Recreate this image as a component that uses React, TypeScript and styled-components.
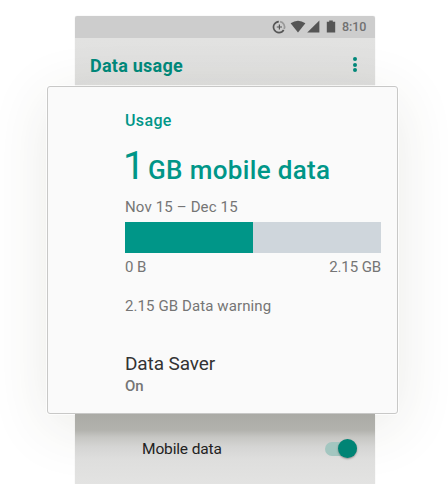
import React from 'react';
import styled, { createGlobalStyle } from 'styled-components';

const USED_GB = 1.075;
const LIMIT_GB = 2.15;

const GlobalStyle = createGlobalStyle`
  * {
    box-sizing: border-box;
  }

  body {
    margin: 0;
    background: #fff;
    font-family: Roboto, 'Liberation Sans', sans-serif;
  }
`;

const App: React.FC = () => (
  <>
    <GlobalStyle />
    <Stage>
      <Phone>
        <StatusBar>
          <StatusIcons />
          <Clock>8:10</Clock>
        </StatusBar>
        <Toolbar>
          <Title>Data usage</Title>
          <Menu aria-label="More options">
            <Dot />
            <Dot />
            <Dot />
          </Menu>
        </Toolbar>
        <Card>
          <SectionLabel>Usage</SectionLabel>
          <Total>
            <Amount>1</Amount>
            <Unit>GB mobile data</Unit>
          </Total>
          <Period>Nov 15 – Dec 15</Period>
          <Meter>
            <MeterFill style={{ width: `${(USED_GB / LIMIT_GB) * 100}%` }} />
          </Meter>
          <Scale>
            <span>0 B</span>
            <span>{LIMIT_GB} GB</span>
          </Scale>
          <Warning>{LIMIT_GB} GB Data warning</Warning>
          <SaverTitle>Data Saver</SaverTitle>
          <SaverState>On</SaverState>
        </Card>
        <SettingRow>
          <SettingName>Mobile data</SettingName>
          <Track role="switch" aria-checked>
            <Thumb />
          </Track>
        </SettingRow>
      </Phone>
    </Stage>
  </>
);

const StatusIcons: React.FC = () => (
  <Icons viewBox="0 0 66 16">
    {/* data saver ring */}
    <g fill="none" strokeWidth="1.7">
      <path d="M6.8 2.6A5.5 5.5 0 1 0 11.7 11" stroke="#555" />
      <path d="M8.1 2.6A5.5 5.5 0 0 1 12.2 10" stroke="#999" />
      <path d="M7.4 5.4V10.6M4.8 8H10" stroke="#555" strokeWidth="1.2" />
    </g>
    <g fill="#555">
      <path d="M18.6 4.2Q26 -0.8 33.4 4.2L26 13.4Z" />
      <path d="M35.2 13.6L47.4 1.4V13.6Z" />
      <path d="M57.2 1.4H60.8V2.8H63.2V13.6H54.8V2.8H57.2Z" />
    </g>
  </Icons>
);

const Stage = styled.main`
  width: 448px;
  height: 484px;
  padding: 16px 73px 0 75px;
  overflow: hidden;
`;

const Phone = styled.div`
  display: flex;
  flex-direction: column;
  width: 300px;
  height: 468px;
  box-shadow: 0 0 1px rgba(0, 0, 0, 0.2);
  border-radius: 2px 2px 0 0;
`;

const StatusBar = styled.header`
  display: flex;
  align-items: center;
  justify-content: flex-end;
  height: 22px;
  padding-right: 8px;
  background: #cdcdcd;
  border-radius: 2px 2px 0 0;
`;

const Icons = styled.svg`
  width: 66px;
  height: 16px;
  margin-right: 4px;
`;

const Clock = styled.span`
  width: 25px;
  color: #717171;
  font-size: 12.5px;
  font-weight: 500;
  line-height: 24px;
  letter-spacing: -0.1px;
`;

const Toolbar = styled.div`
  display: flex;
  align-items: center;
  justify-content: space-between;
  height: 48px;
  padding: 6px 18px 0 15px;
  background: linear-gradient(#e2e2e1, #dfdfde);
`;

const Title = styled.h1`
  margin: 0;
  color: #00897b;
  font-size: 18px;
  font-weight: 700;
  letter-spacing: 0.25px;
`;

const Menu = styled.button`
  display: flex;
  flex-direction: column;
  gap: 1.4px;
  padding: 0;
  margin-top: -1px;
  border: none;
  background: transparent;
`;

const Dot = styled.span`
  width: 4px;
  height: 4px;
  border-radius: 50%;
  background: #00897b;
`;

const Card = styled.section`
  flex: none;
  height: 328px;
  margin: 0 -23px 0 -28px;
  padding: 24px 16px 0 77px;
  border: 1px solid #c8c8c7;
  border-radius: 3px;
  background: #fafafa;
  box-shadow: 0 0 0 1px rgba(255, 255, 255, 0.7), 0 12px 60px rgba(60, 60, 40, 0.11);
`;

const SectionLabel = styled.h2`
  margin: 0;
  color: #009688;
  font-size: 16px;
  font-weight: 500;
  line-height: 20px;
  letter-spacing: 0.35px;
`;

const Total = styled.div`
  display: flex;
  align-items: baseline;
  height: 54px;
  margin-top: 8px;
  color: #009688;
  line-height: 54px;
`;

const Amount = styled.span`
  width: 25px;
  margin-left: -2px;
  font-size: 39px;
`;

const Unit = styled.span`
  font-size: 26px;
  font-weight: 500;
  letter-spacing: 0.35px;
  white-space: nowrap;
`;

const Period = styled.p`
  margin: 4px 0 5px;
  color: #757575;
  font-size: 15px;
  line-height: 20px;
  letter-spacing: 0.15px;
`;

const Meter = styled.div`
  width: 256px;
  height: 31px;
  background: #cfd6dc;
`;

const MeterFill = styled.div`
  height: 100%;
  background: #009688;
`;

const Scale = styled.div`
  display: flex;
  justify-content: space-between;
  margin-top: 4px;
  color: #757575;
  font-size: 15px;
  line-height: 20px;
  letter-spacing: -0.1px;
`;

const Warning = styled.p`
  margin: 19px 0 0;
  color: #757575;
  font-size: 15px;
  line-height: 20px;
  letter-spacing: 0.1px;
`;

const SaverTitle = styled.h3`
  margin: 35px 0 0;
  color: #333;
  font-size: 19px;
  font-weight: 400;
  line-height: 26px;
  letter-spacing: -0.1px;
`;

const SaverState = styled.p`
  margin: -1px 0 0;
  color: #757575;
  font-size: 15px;
  font-weight: 500;
  line-height: 20px;
`;

const SettingRow = styled.div`
  display: flex;
  flex: 1;
  align-items: center;
  justify-content: space-between;
  padding: 0 18px 1px 67px;
  background: linear-gradient(#aaaaa5 0, #b2b2ad 16px, #c6c6c3 23px, #d5d5d4 33px, #dededd 45px, #e3e3e2 70px);
`;

const SettingName = styled.span`
  color: #222;
  font-size: 15.5px;
  line-height: 20px;
  letter-spacing: -0.15px;
`;

const Track = styled.div`
  display: flex;
  align-items: center;
  justify-content: flex-end;
  width: 32px;
  height: 14px;
  border-radius: 7px;
  background: #a3c6c0;
`;

const Thumb = styled.div`
  width: 19px;
  height: 19px;
  flex: none;
  border-radius: 50%;
  background: #008475;
  box-shadow: 0 1px 2px rgba(0, 0, 0, 0.35);
`;

export default App;
